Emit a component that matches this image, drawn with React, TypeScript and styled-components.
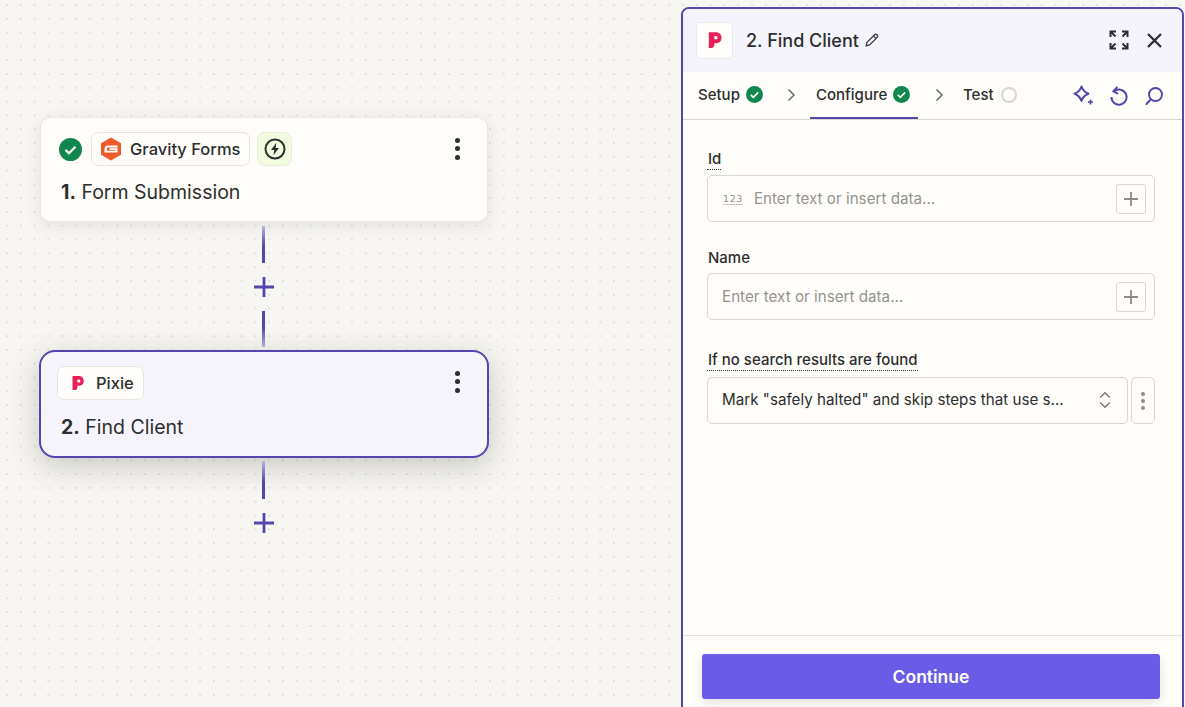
import React from 'react';
import styled, { createGlobalStyle } from 'styled-components';

const GlobalStyle = createGlobalStyle`
  html, body { margin: 0; padding: 0; height: 100%; overflow: hidden; }
  body { font-family: Inter, 'Liberation Sans', sans-serif; color: #2d2e2e; }
  * { box-sizing: border-box; }
`;

// ── Layout ────────────────────────────────────────────────────────────────────

const Shell = styled.div`
  display: flex;
  width: 1185px;
  height: 707px;
  overflow: hidden;
  background-color: #f7f6f3;
  background-image: radial-gradient(circle at 1px 1px, #e2e0da 0.7px, transparent 1px);
  background-size: 13.8px 13.8px;
  background-position: 6px 4px;
`;

const Canvas = styled.div`
  flex: 0 0 681px;
  display: flex;
  flex-direction: column;
  padding: 117px 0 0 39px;
  width: 681px;
`;

// ── Flow nodes ────────────────────────────────────────────────────────────────

const Card = styled.div<{ $selected?: boolean }>`
  width: ${p => (p.$selected ? 450 : 448)}px;
  height: ${p => (p.$selected ? 108 : 105)}px;
  margin-left: ${p => (p.$selected ? 0 : 1)}px;
  margin-top: ${p => (p.$selected ? 3 : 0)}px;
  padding: ${p => (p.$selected ? '14px 20px 0 16px' : '14px 20px 0 18px')};
  border-radius: ${p => (p.$selected ? 16 : 10)}px;
  background: ${p => (p.$selected ? '#f6f5fd' : '#fffdf9')};
  border: ${p => (p.$selected ? '2px solid #5546ac' : '1px solid #e9e7e1')};
  box-shadow: ${p =>
    p.$selected ? '0 8px 30px rgba(60, 55, 45, 0.24)' : '0 4px 16px rgba(60, 55, 45, 0.1)'};
`;

const CardTop = styled.div`
  display: flex;
  align-items: center;
  height: 34px;
`;

const AppChip = styled.div<{ $left?: number; $gap?: number; $before?: number }>`
  display: flex;
  align-items: center;
  height: 34px;
  margin-left: ${p => p.$before ?? 0}px;
  padding: 0 9px 1px ${p => p.$left ?? 8}px;
  gap: ${p => p.$gap ?? 8}px;
  background: #fffefb;
  border: 1px solid #e7e5df;
  border-radius: 7px;
  font-size: 16.5px;
  font-weight: 500;
  color: #2d2e2e;
`;

const TriggerChip = styled.div`
  display: flex;
  align-items: center;
  justify-content: center;
  width: 35px;
  height: 34px;
  margin-left: 7px;
  background: #f2fadf;
  border: 1px solid #e9eedb;
  border-radius: 7px;
`;

const Kebab = styled.div<{ $lift: number }>`
  margin-left: auto;
  display: flex;
  flex-direction: column;
  gap: 3.5px;
  margin-right: 7px;
  margin-top: ${p => -p.$lift}px;
`;

const KebabDot = styled.span<{ $size?: number; $color?: string }>`
  display: block;
  width: ${p => p.$size ?? 5}px;
  height: ${p => p.$size ?? 5}px;
  border-radius: 50%;
  background: ${p => p.$color ?? '#2d2e2e'};
`;

const CardTitle = styled.div<{ $selected?: boolean }>`
  margin: ${p => (p.$selected ? '15px 0 0 4px' : '14px 0 0 2px')};
  font-size: 19.5px;
  line-height: 24px;
  color: #2d2e2e;

  b { font-weight: 700; }
`;

const ConnectorWrap = styled.div`
  width: 449px;
  display: flex;
  flex-direction: column;
  align-items: center;
`;

const Line = styled.div<{ $fade: 'top' | 'bottom'; $height: number; $top: number }>`
  width: 3px;
  height: ${p => p.$height}px;
  margin-top: ${p => p.$top}px;
  background: linear-gradient(
    ${p => (p.$fade === 'top' ? 'to bottom' : 'to top')},
    #b9b2e6 0%,
    #5546ac 55%,
    #5546ac 100%
  );
`;

const PlusMark = styled.div<{ $top: number }>`
  display: flex;
  margin-top: ${p => p.$top}px;
  color: #5546ac;
`;

// ── Right panel ───────────────────────────────────────────────────────────────

const Panel = styled.aside`
  flex: 0 0 503px;
  display: flex;
  flex-direction: column;
  height: 702px;
  margin-top: 7px;
  background: #fffefb;
  border: 2px solid #5546ac;
  border-radius: 8px 8px 0 0;
`;

const PanelHeader = styled.header`
  display: flex;
  align-items: center;
  height: 63px;
  flex-shrink: 0;
  padding: 0 20px 1px 13px;
  background: #f5f4fd;
  border-radius: 6px 6px 0 0;
`;

const LogoBox = styled.div`
  display: flex;
  align-items: center;
  justify-content: center;
  width: 37px;
  height: 37px;
  background: #fffefb;
  border: 1px solid #eceae6;
  border-radius: 5px;
`;

const PanelTitle = styled.div`
  margin-left: 13px;
  font-size: 18px;
  font-weight: 550;
  color: #2d2e2e;
`;

const EditIcon = styled.span`
  display: flex;
  margin-left: 5px;
`;

const HeaderActions = styled.div`
  margin-left: auto;
  display: flex;
  align-items: center;
  gap: 18px;
`;

const Tabs = styled.nav`
  display: flex;
  align-items: stretch;
  height: 48px;
  flex-shrink: 0;
  padding: 0 18px 0 15px;
  border-bottom: 1px solid #d8d6d0;
`;

const Tab = styled.div<{ $active?: boolean; $width: number }>`
  position: relative;
  display: flex;
  align-items: center;
  gap: 6px;
  width: ${p => p.$width}px;
  padding-left: ${p => (p.$active ? 6 : 0)}px;
  padding-bottom: 2px;
  font-size: 15px;
  font-weight: 550;
  color: #2d2e2e;

  ${p =>
    p.$active &&
    `&::after {
      content: '';
      position: absolute;
      left: 0;
      right: 0;
      bottom: 0;
      height: 2px;
      background: #5546ac;
    }`}
`;

const TabArrow = styled.div<{ $width: number; $trim?: number }>`
  display: flex;
  align-items: center;
  justify-content: center;
  width: ${p => p.$width}px;
  padding: 0 ${p => p.$trim ?? 0}px 2px 0;
  color: #6b6a66;
`;

const EmptyDot = styled.span`
  display: block;
  width: 16px;
  height: 16px;
  margin-left: 1px;
  border-radius: 50%;
  border: 2px solid #d8d6d0;
`;

const TabTools = styled.div`
  margin-left: auto;
  display: flex;
  align-items: center;
  gap: 15px;
`;

const PanelBody = styled.main`
  flex: 1;
  padding: 29px 27px 0 24px;
`;

const Field = styled.div<{ $gap: number }>`
  margin-bottom: ${p => p.$gap}px;
`;

const Label = styled.div<{ $hint?: boolean; $below: number }>`
  display: table;
  margin-bottom: ${p => p.$below}px;
  padding-left: 1px;
  font-size: 15px;
  line-height: 19px;
  font-weight: 550;
  color: #2d2e2e;
  ${p => p.$hint && 'padding-bottom: 1px; border-bottom: 1px dotted #2d2e2e;'}
`;

const InputBox = styled.div`
  display: flex;
  align-items: center;
  height: 47px;
  padding: 0 8px 0 14px;
  background: #fffefb;
  border: 1px solid #d8d6d0;
  border-radius: 5px;
`;

const NumberTag = styled.span`
  margin: 0 11px 0 1px;
  font-family: 'DejaVu Sans', sans-serif;
  font-size: 9.5px;
  line-height: 11px;
  letter-spacing: 0.6px;
  color: #95938e;
  border-bottom: 1px solid #c8c6c0;
`;

const Placeholder = styled.span`
  font-size: 15.2px;
  color: #95938e;
`;

const AddBtn = styled.div`
  margin-left: auto;
  display: flex;
  align-items: center;
  justify-content: center;
  width: 30px;
  height: 30px;
  border: 1px solid #d8d6d0;
  border-radius: 3px;
  color: #8d8b86;
`;

const SelectRow = styled.div`
  display: flex;
  gap: 3px;
`;

const SelectBox = styled(InputBox)`
  flex: 1;
  padding-right: 16px;
  padding-bottom: 2px;
  font-size: 15.2px;
  color: #2d2e2e;
`;

const Updown = styled.span`
  margin-left: auto;
  display: flex;
  color: #77756f;
`;

const MoreBtn = styled.div`
  display: flex;
  flex-direction: column;
  align-items: center;
  justify-content: center;
  gap: 3px;
  width: 24px;
  height: 47px;
  border: 1px solid #d8d6d0;
  border-radius: 5px;
`;

const PanelFooter = styled.footer`
  flex-shrink: 0;
  height: 72px;
  padding: 18px 22px 0 19px;
  border-top: 1px solid #e6e4df;
`;

const ContinueBtn = styled.button`
  display: block;
  width: 100%;
  height: 45px;
  border: 0;
  border-radius: 3px;
  background: #6a5ce6;
  color: #fffefb;
  font-family: inherit;
  font-size: 17.5px;
  font-weight: 600;
  box-shadow: 0 4px 12px rgba(60, 55, 45, 0.14);
`;

// ── Icons ─────────────────────────────────────────────────────────────────────

function CheckBadge({ size }: { size: number }) {
  return (
    <svg width={size} height={size} viewBox="0 0 24 24" style={{ flexShrink: 0 }}>
      <circle cx="12" cy="12" r="12" fill="#12864f" />
      <path d="M6.8 12.4l3.6 3.5 6.8-6.8" fill="none" stroke="#fffefb" strokeWidth="2.4" />
    </svg>
  );
}

function GravityLogo() {
  return (
    <svg width="22" height="24" viewBox="0 0 22 24">
      <path d="M11 .5l10 5.7v11.6l-10 5.7-10-5.7V6.2z" fill="#f15a2b" />
      <path
        d="M17.5 8.5H8.2C6 8.5 4.5 10 4.5 12v3.5h13v-4.3H9.6v1.7h5.6v.9H6.9V12c0-1 .6-1.6 1.6-1.6h9z"
        fill="#fff"
      />
    </svg>
  );
}

function PixieLogo({ size }: { size: number }) {
  return (
    <svg width={size} height={size} viewBox="0 0 16 16">
      <path
        d="M2.5 1h6.3c2.9 0 5 2 5 4.9s-2.1 4.9-5 4.9H7.4v1.6c0 1.7-1.2 2.6-2.9 2.6h-2zM7.4 4.4v3h1.3c1 0 1.6-.6 1.6-1.5s-.6-1.5-1.6-1.5z"
        fill="#e8215a"
      />
    </svg>
  );
}

function Bolt() {
  return (
    <svg width="22" height="22" viewBox="0 0 22 22">
      <circle cx="11" cy="11" r="9.5" fill="none" stroke="#2d2e2e" strokeWidth="2" />
      <path d="M12.4 4.8L7 12h3.3l-.9 5.2L15 10h-3.4z" fill="#2d2e2e" />
    </svg>
  );
}

function Plus({ size, width }: { size: number; width: number }) {
  return (
    <svg width={size} height={size} viewBox={`0 0 ${size} ${size}`}>
      <path
        d={`M${size / 2} 0v${size}M0 ${size / 2}h${size}`}
        stroke="currentColor"
        strokeWidth={width}
      />
    </svg>
  );
}

function Pencil() {
  return (
    <svg width="16" height="16" viewBox="0 0 16 16" fill="none" stroke="#3b3b3a" strokeWidth="1.3">
      <path d="M2.2 13.8l.8-3.4 7.6-7.6a1.5 1.5 0 0 1 2.1 0l.5.5a1.5 1.5 0 0 1 0 2.1l-7.6 7.6z" />
      <path d="M9.5 3.9l2.6 2.6" />
    </svg>
  );
}

function Expand() {
  return (
    <svg width="20" height="20" viewBox="0 0 20 20" fill="none" stroke="#2d2e2e" strokeWidth="2">
      <path d="M1.5 7V1.5H7M1.5 1.5l5 5M13 1.5h5.5V7M18.5 1.5l-5 5M1.5 13v5.5H7M1.5 18.5l5-5M13 18.5h5.5V13M18.5 18.5l-5-5" />
    </svg>
  );
}

function Close() {
  return (
    <svg width="15" height="15" viewBox="0 0 15 15" stroke="#2d2e2e" strokeWidth="2.3">
      <path d="M1 1l13 13M14 1L1 14" />
    </svg>
  );
}

function Chevron() {
  return (
    <svg width="9" height="14" viewBox="0 0 9 14" fill="none" stroke="currentColor" strokeWidth="1.5">
      <path d="M1.5 1.5L7 7l-5.5 5.5" />
    </svg>
  );
}

function Sparkle() {
  return (
    <svg width="21" height="21" viewBox="0 0 21 21" fill="none" stroke="#5546ac" strokeWidth="2">
      <path d="M8.5 1.5c1.3 3.8 3.1 5.8 7 7.2-3.9 1.4-5.7 3.4-7 7.3-1.3-3.9-3.1-5.9-7-7.3 3.9-1.4 5.7-3.4 7-7.2z" strokeLinejoin="round" />
      <path d="M17.5 14.5v5M15 17h5" strokeWidth="1.7" />
    </svg>
  );
}

function Undo() {
  return (
    <svg width="20" height="20" viewBox="0 0 20 20" fill="none" stroke="#5546ac" strokeWidth="2">
      <path d="M5.2 5.2A7.6 7.6 0 1 1 2.4 11" />
      <path d="M8.4 1L4.4 5.2l4.6 2.6" />
    </svg>
  );
}

function SearchRound() {
  return (
    <svg width="20" height="20" viewBox="0 0 20 20" fill="none" stroke="#5546ac" strokeWidth="2">
      <circle cx="11.5" cy="8.5" r="6.5" />
      <path d="M6.5 13.5L2.5 18" strokeLinecap="round" />
    </svg>
  );
}

function UpDown() {
  return (
    <svg width="12" height="18" viewBox="0 0 12 18" fill="none" stroke="currentColor" strokeWidth="1.4">
      <path d="M1.2 6.5L6 1.8l4.8 4.7M1.2 11.5L6 16.2l4.8-4.7" />
    </svg>
  );
}

// ── Component ─────────────────────────────────────────────────────────────────

export default function App() {
  return (
    <Shell>
      <GlobalStyle />
      <Canvas>
        <Card>
          <CardTop>
            <CheckBadge size={23} />
            <AppChip $before={9}>
              <GravityLogo />
              Gravity Forms
            </AppChip>
            <TriggerChip>
              <Bolt />
            </TriggerChip>
            <Kebab $lift={1}>
              <KebabDot />
              <KebabDot />
              <KebabDot />
            </Kebab>
          </CardTop>
          <CardTitle>
            <b>1.</b> Form Submission
          </CardTitle>
        </Card>

        <ConnectorWrap>
          <Line $fade="top" $height={37} $top={4} />
          <PlusMark $top={14}>
            <Plus size={20} width={2.8} />
          </PlusMark>
          <Line $fade="bottom" $height={36} $top={14} />
        </ConnectorWrap>

        <Card $selected>
          <CardTop>
            <AppChip $left={12} $gap={10}>
              <PixieLogo size={16} />
              Pixie
            </AppChip>
            <Kebab $lift={3}>
              <KebabDot />
              <KebabDot />
              <KebabDot />
            </Kebab>
          </CardTop>
          <CardTitle $selected>
            <b>2.</b> Find Client
          </CardTitle>
        </Card>

        <ConnectorWrap>
          <Line $fade="top" $height={38} $top={3} />
          <PlusMark $top={14}>
            <Plus size={20} width={2.8} />
          </PlusMark>
        </ConnectorWrap>
      </Canvas>

      <Panel>
        <PanelHeader>
          <LogoBox>
            <PixieLogo size={18} />
          </LogoBox>
          <PanelTitle>2. Find Client</PanelTitle>
          <EditIcon>
            <Pencil />
          </EditIcon>
          <HeaderActions>
            <Expand />
            <Close />
          </HeaderActions>
        </PanelHeader>

        <Tabs>
          <Tab $width={75}>
            Setup
            <CheckBadge size={17} />
          </Tab>
          <TabArrow $width={37}>
            <Chevron />
          </TabArrow>
          <Tab $active $width={108}>
            Configure
            <CheckBadge size={17} />
          </Tab>
          <TabArrow $width={45} $trim={2}>
            <Chevron />
          </TabArrow>
          <Tab $width={60}>
            Test
            <EmptyDot />
          </Tab>
          <TabTools>
            <Sparkle />
            <Undo />
            <SearchRound />
          </TabTools>
        </Tabs>

        <PanelBody>
          <Field $gap={26}>
            <Label $hint $below={5}>Id</Label>
            <InputBox>
              <NumberTag>123</NumberTag>
              <Placeholder>Enter text or insert data...</Placeholder>
              <AddBtn>
                <Plus size={14} width={1.8} />
              </AddBtn>
            </InputBox>
          </Field>
          <Field $gap={30}>
            <Label $below={6}>Name</Label>
            <InputBox>
              <Placeholder>Enter text or insert data...</Placeholder>
              <AddBtn>
                <Plus size={14} width={1.8} />
              </AddBtn>
            </InputBox>
          </Field>
          <Field $gap={0}>
            <Label $hint $below={6}>If no search results are found</Label>
            <SelectRow>
              <SelectBox>
                Mark "safely halted" and skip steps that use s...
                <Updown>
                  <UpDown />
                </Updown>
              </SelectBox>
              <MoreBtn>
                <KebabDot $size={4} $color="#8d8b86" />
                <KebabDot $size={4} $color="#8d8b86" />
                <KebabDot $size={4} $color="#8d8b86" />
              </MoreBtn>
            </SelectRow>
          </Field>
        </PanelBody>

        <PanelFooter>
          <ContinueBtn>Continue</ContinueBtn>
        </PanelFooter>
      </Panel>
    </Shell>
  );
}
